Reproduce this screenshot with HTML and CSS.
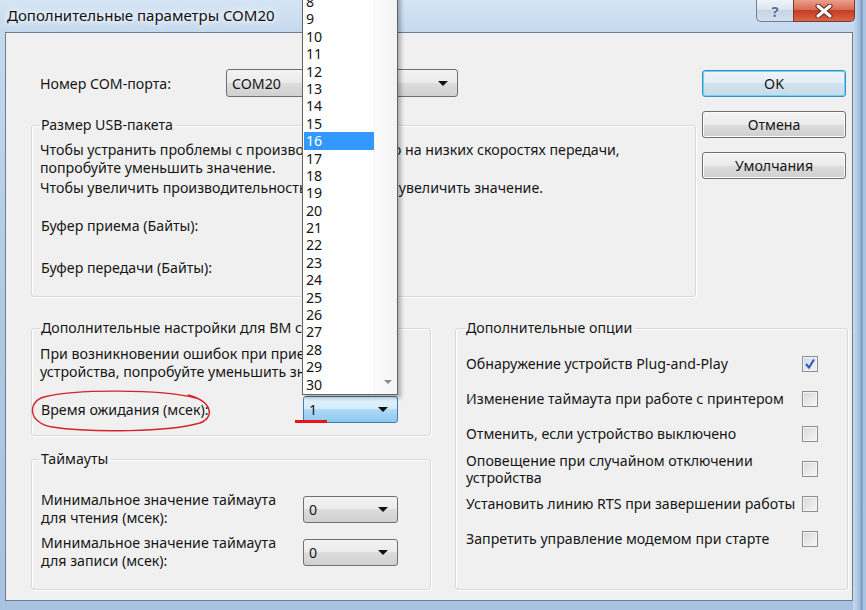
FILE: index.html
```html
<!DOCTYPE html>
<html lang="ru">
<head>
<meta charset="utf-8">
<title>Дополнительные параметры COM20</title>
<link rel="stylesheet" href="styles.css">
</head>
<body>
<div class="window">
  <div class="titlebar">
    <span class="title">Дополнительные параметры COM20</span>
    <div class="caption">
      <span class="cap help">?</span>
      <span class="cap close">
        <svg width="18" height="14" viewBox="0 0 18 14"><path d="M3 2 L15 12 M15 2 L3 12" stroke="#5a2a22" stroke-width="5" stroke-linecap="round"/><path d="M3 2 L15 12 M15 2 L3 12" stroke="#fff" stroke-width="3" stroke-linecap="round"/></svg>
      </span>
    </div>
  </div>

  <div class="client">
    <div class="top">
      <div class="main">
        <div class="port-row">
          <span class="port-label">Номер COM-порта:</span>
          <div class="combo wide"><span>COM20</span><i class="arrow"></i></div>
        </div>
        <fieldset class="group usb">
          <legend>Размер USB-пакета</legend>
          <p>Чтобы устранить проблемы с производительностью на низких скоростях передачи,<br>попробуйте уменьшить значение.</p>
          <p class="p2">Чтобы увеличить производительность, попробуйте увеличить значение.</p>
          <div class="field-row r1"><span class="field-label">Буфер приема (Байты):</span></div>
          <div class="field-row r2"><span class="field-label">Буфер передачи (Байты):</span></div>
        </fieldset>
      </div>
      <div class="buttons">
        <div class="btn default">OK</div>
        <div class="btn">Отмена</div>
        <div class="btn">Умолчания</div>
      </div>
    </div>

    <div class="bottom">
      <div class="left-col">
        <fieldset class="group bm">
          <legend>Дополнительные настройки для BM серии</legend>
          <p>При возникновении ошибок при приеме данных от<br>устройства, попробуйте уменьшить значение.</p>
          <div class="field-row latency"><span class="field-label">Время ожидания (мсек):</span><div class="combo small focus"><span>1</span><i class="arrow"></i></div></div>
        </fieldset>
        <fieldset class="group timeouts">
          <legend>Таймауты</legend>
          <div class="field-row t1"><span class="field-label">Минимальное значение таймаута<br>для чтения (мсек):</span><div class="combo small"><span>0</span><i class="arrow"></i></div></div>
          <div class="field-row t2"><span class="field-label">Минимальное значение таймаута<br>для записи (мсек):</span><div class="combo small"><span>0</span><i class="arrow"></i></div></div>
        </fieldset>
      </div>
      <fieldset class="group options">
        <legend>Дополнительные опции</legend>
        <div class="opt"><span>Обнаружение устройств Plug-and-Play</span><span class="chk checked"><svg width="14" height="14" viewBox="0 0 14 14"><path d="M3 7 L6 10.5 L11 2.5" fill="none" stroke="#3d4fb0" stroke-width="2"/></svg></span></div>
        <div class="opt"><span>Изменение таймаута при работе с принтером</span><span class="chk"></span></div>
        <div class="opt"><span>Отменить, если устройство выключено</span><span class="chk"></span></div>
        <div class="opt"><span>Оповещение при случайном отключении<br>устройства</span><span class="chk"></span></div>
        <div class="opt"><span>Установить линию RTS при завершении работы</span><span class="chk"></span></div>
        <div class="opt"><span>Запретить управление модемом при старте</span><span class="chk"></span></div>
      </fieldset>
    </div>
  </div>

  <div class="droplist">
    <ul class="items">
      <li>8</li><li>9</li><li>10</li><li>11</li><li>12</li><li>13</li><li>14</li><li>15</li>
      <li class="sel">16</li><li>17</li><li>18</li><li>19</li><li>20</li><li>21</li><li>22</li><li>23</li>
      <li>24</li><li>25</li><li>26</li><li>27</li><li>28</li><li>29</li><li>30</li>
    </ul>
    <div class="scroll"><i class="sarrow"></i></div>
  </div>

  <svg class="annot" width="866" height="610" viewBox="0 0 866 610">
    <path d="M196 398 C160 389, 75 389, 44 397 C27 402, 28 423, 52 427 C92 433, 168 432, 200 423 C214 418, 214 402, 188 395" fill="none" stroke="#d8232a" stroke-width="1.4"/>
    <path d="M295 421.5 L327 421.5" stroke="#e8141c" stroke-width="3"/>
  </svg>
</div>
</body>
</html>
```
FILE: styles.css
```css
* { box-sizing: border-box; margin: 0; padding: 0; }
html, body { width: 866px; height: 610px; overflow: hidden; }
body {
  font-family: "Noto Sans", "Open Sans", sans-serif;
  font-size: 14.2px;
  color: #161616;
  background: #b4cce6;
}
.window {
  position: relative;
  width: 866px;
  height: 610px;
  overflow: hidden;
  background:
    linear-gradient(90deg, rgba(255,255,255,0) 0, rgba(255,255,255,0) 853px, #c9dbee 853px, #9ebcdc 860px, #6f8fb3 862px, #a9c4e2 863px),
    linear-gradient(180deg, #d6e5f4 0, #c5d9ee 32px, #b0c9e5 300px, #a8c3e1 610px);
}
.titlebar {
  height: 32px;
  display: flex;
  align-items: flex-start;
  padding-left: 7px;
}
.title {
  font-size: 15px;
  line-height: 20px;
  margin-top: 5px;
  color: #111;
  text-shadow: 0 0 6px #fff, 0 0 10px #fff;
}
.caption { margin-left: auto; margin-right: 11px; display: flex; }
.cap {
  height: 22px;
  display: flex;
  align-items: center;
  justify-content: center;
  border: 1px solid #6f7f93;
  border-top: none;
}
.help {
  width: 37px;
  border-radius: 0 0 0 5px;
  border-right: none;
  background: linear-gradient(#eef3f9, #d8e3ef 50%, #c6d4e4 50%, #d3e0ee);
  color: #56708e;
  font-weight: bold;
  font-size: 15px;
  text-shadow: 0 0 2px #fff;
}
.close {
  width: 62px;
  border-radius: 0 0 5px 0;
  border-color: #7b3a31;
  background: linear-gradient(#eaa08c, #d8664f 50%, #c63c24 50%, #d9654a);
}

.client {
  position: relative;
  margin-left: 5px;
  width: 848px;
  height: 569px;
  background: #f0f0f0;
  border: 1px solid #6e7e90;
  padding: 36px 0 0 25px;
}
.top { display: flex; gap: 6px; }
.main { width: 665px; }
.port-row { display: flex; align-items: center; height: 28px; }
.port-label { width: 186px; margin-left: 9px; }

.combo {
  display: flex;
  align-items: center;
  justify-content: space-between;
  height: 28px;
  border: 1px solid #707070;
  border-radius: 3px;
  background: linear-gradient(#f3f3f3, #ebebeb 50%, #dddddd 50%, #d0d0d0);
  padding: 0 9px 0 5px;
}
.combo.wide { width: 232px; }
.combo.small { width: 95px; height: 27px; }
.combo.focus {
  border-color: #3c7fb1;
  background: linear-gradient(#e6f4fc, #d2ecfb 50%, #aedbf6 50%, #8ec8ee);
}
.arrow {
  width: 0; height: 0;
  border-left: 5px solid transparent;
  border-right: 5px solid transparent;
  border-top: 5px solid #111;
}

.group {
  min-width: 0;
  border: 1px solid #d5d9dd;
  border-radius: 3px;
  box-shadow: inset 1px 1px 0 #fff, 1px 1px 0 #fff;
  padding: 0 9px 0 8px;
}
.group legend {
  line-height: 18px;
  padding: 0 3px 0 1px;
}
p { line-height: 18px; }
.usb { margin-top: 19px; padding-top: 7px; padding-bottom: 14px; }
.usb .p2 { margin-top: 2px; }
.field-row { display: flex; align-items: center; }
.field-label { width: 262px; margin-left: 1px; line-height: 18px; }
.usb .field-row { height: 28px; }
.usb .r1 { margin-top: 15px; }
.usb .r2 { margin-top: 14px; }

.buttons { width: 144px; display: flex; flex-direction: column; gap: 14px; padding-top: 1px; }
.btn {
  height: 27px;
  border: 1px solid #707070;
  border-radius: 3px;
  background: linear-gradient(#f3f3f3, #ebebeb 50%, #dddddd 50%, #cfcfcf);
  display: flex;
  align-items: center;
  justify-content: center;
  box-shadow: inset 0 0 0 1px #fbfbfb;
}
.btn.default {
  border-color: #3c8ec4;
  box-shadow: inset 0 0 0 1px #6fd2f2;
  background: linear-gradient(#eef5fa, #e1ecf4 50%, #d2e2ee 50%, #c8dbea);
}

.bottom { display: flex; gap: 24px; margin-top: 22px; }
.left-col { width: 400px; display: flex; flex-direction: column; gap: 14px; }
.bm { padding-top: 8px; padding-bottom: 12px; }
.bm .latency { margin-top: 15px; }
.timeouts { padding-top: 23px; padding-bottom: 19px; }
.timeouts .t2 { margin-top: 7px; }

.options { width: 393px; padding: 9px 29px 0 10px; }
.options legend { padding: 0 3px 0 0; }
.opt {
  height: 35px;
  display: flex;
  align-items: center;
  justify-content: space-between;
  line-height: 17px;
  white-space: nowrap;
}
.chk {
  width: 16px;
  height: 16px;
  border: 1px solid #8e8f8f;
  background: linear-gradient(135deg, #d8d8d8, #f7f7f7);
  box-shadow: inset 0 0 0 1px #f4f4f4;
  display: flex;
  align-items: center;
  justify-content: center;
}
.chk.checked { background: linear-gradient(135deg, #c9d8f0, #f3f6fb); }

.droplist {
  position: absolute;
  left: 302px;
  top: -8px;
  width: 96px;
  height: 403px;
  border: 1px solid #646464;
  background: #fff;
  display: flex;
  box-shadow: 3px 3px 4px rgba(0,0,0,0.28);
}
.items { list-style: none; width: 71px; }
.items li {
  height: 17.4px;
  line-height: 17.4px;
  padding-left: 3px;
  font-size: 14.2px;
}
.items li.sel { background: #3399ff; color: #fff; margin: 0 0 0 1px; padding-left: 2px; }
.scroll {
  position: relative;
  flex: 1;
  background: linear-gradient(90deg, #fbfbfb, #f3f3f3);
  border-left: 1px solid #f6f6f6;
}
.sarrow {
  position: absolute;
  left: 9px;
  bottom: 10px;
  width: 0; height: 0;
  border-left: 4px solid transparent;
  border-right: 4px solid transparent;
  border-top: 4px solid #8a8a8a;
}
.annot { position: absolute; left: 0; top: 0; pointer-events: none; }
```
